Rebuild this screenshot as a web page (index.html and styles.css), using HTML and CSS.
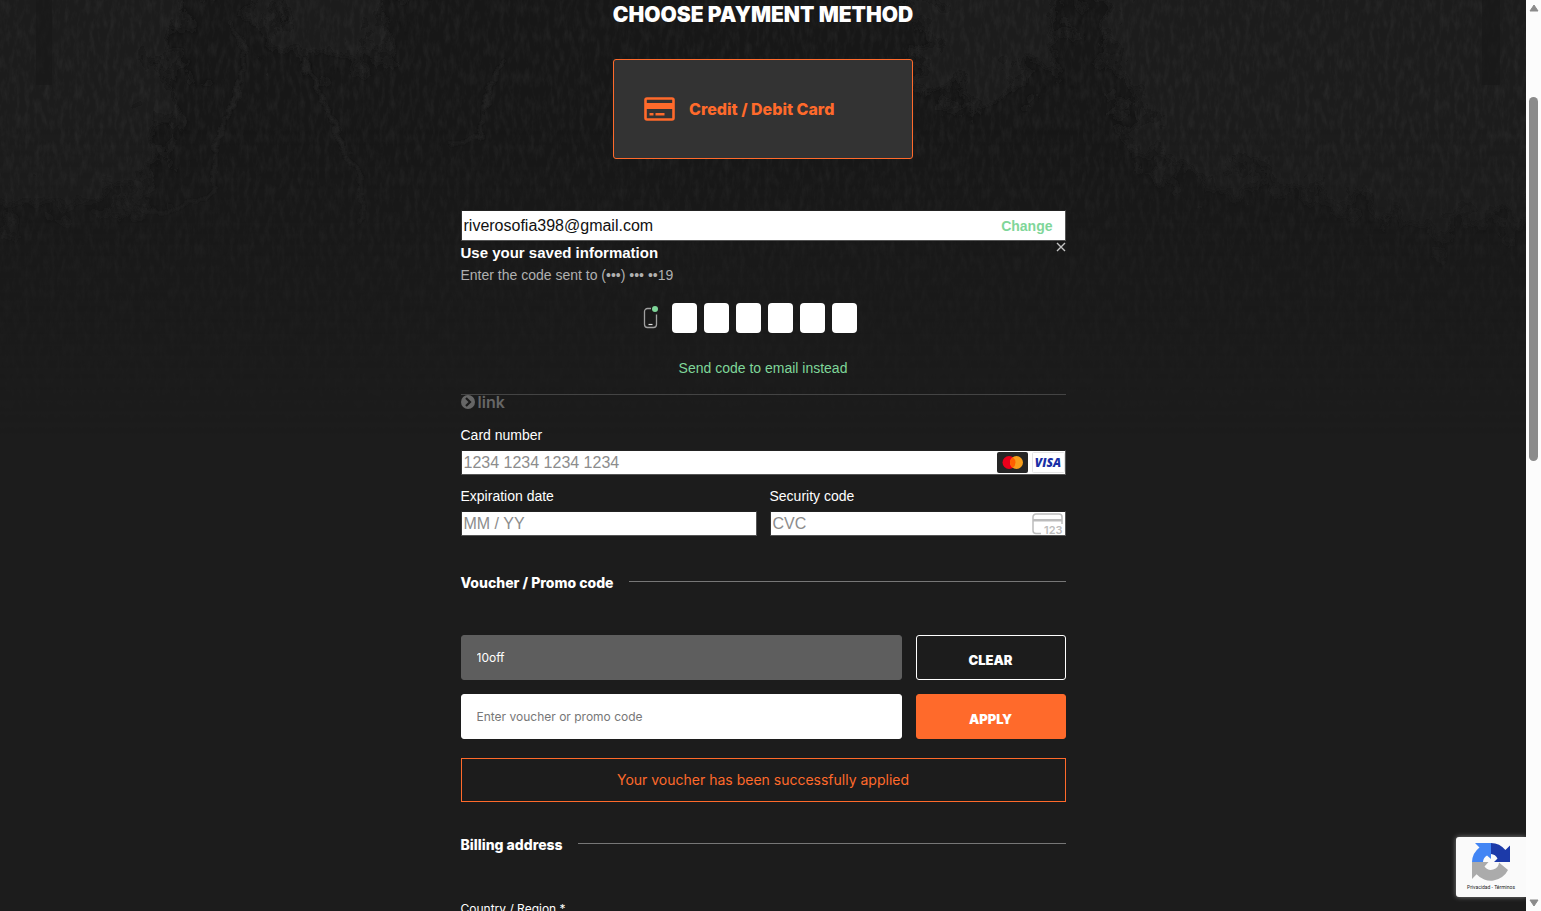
FILE: index.html
```html
<!DOCTYPE html>
<html lang="en">
<head>
  <meta charset="UTF-8">
  <title>Checkout</title>
  <link rel="stylesheet" href="styles.css">
</head>
<body>
  <div class="page">
    <svg class="texture" viewBox="0 0 1526 620" preserveAspectRatio="none" aria-hidden="true">
      <defs>
        <filter id="grain" x="0" y="0" width="100%" height="100%">
          <feTurbulence type="fractalNoise" baseFrequency="0.2 0.07" numOctaves="4" seed="8"/>
          <feColorMatrix values="0 0 0 0 1  0 0 0 0 1  0 0 0 0 1  0.5 0 0 0 -0.2"/>
        </filter>
        <filter id="soft" x="-20%" y="-20%" width="140%" height="140%">
          <feTurbulence type="fractalNoise" baseFrequency="0.04" numOctaves="5" seed="5" result="noise"/>
          <feGaussianBlur in="SourceGraphic" stdDeviation="9" result="blur"/>
          <feDisplacementMap in="blur" in2="noise" scale="90" xChannelSelector="R" yChannelSelector="G"/>
        </filter>
        <filter id="rough" x="-10%" y="-10%" width="120%" height="120%">
          <feTurbulence type="fractalNoise" baseFrequency="0.06" numOctaves="3" seed="3" result="noise"/>
          <feDisplacementMap in="SourceGraphic" in2="noise" scale="16" xChannelSelector="R" yChannelSelector="G"/>
          <feGaussianBlur stdDeviation="1"/>
        </filter>
        <linearGradient id="fade" x1="0" y1="0" x2="0" y2="1">
          <stop offset="0" stop-color="#fff"/>
          <stop offset="0.2" stop-color="#fff"/>
          <stop offset="0.7" stop-color="#000"/>
        </linearGradient>
        <mask id="fadeMask"><rect width="1526" height="620" fill="url(#fade)"/></mask>
      </defs>
      <g mask="url(#fadeMask)">
        <rect width="1526" height="620" fill="#171717"/>
        <g fill="#1e1e1e" filter="url(#soft)">
          <path d="M-60-60H215L165 60 175 120 140 200-60 210Z"/>
          <path d="M245-60H420L370 62 300 55 270 40Z"/>
          <path d="M1080-60H1600V200L1440 230 1300 190 1150 170Z"/>
          <path d="M920-60H1080L1050 60 980 110 920 80Z"/>
        </g>
        <rect width="1526" height="620" filter="url(#grain)" opacity="0.18"/>
        <g fill="none" stroke="#222" stroke-width="3" filter="url(#rough)">
          <path d="M228 20l18 30-14 55-16 40-3 48-42 20-50-6"/>
          <path d="M300 60l20 28 14 40 22 44 6 50"/>
          <path d="M505 60l-18 30-8 48-30 8"/>
        </g>
        <path d="M36 0h16v85H36zM1482 0h18v85h-18z" fill="#181818" opacity="0.6"/>
      </g>
    </svg>

    <main class="checkout">
      <h1>Choose payment method</h1>

      <button class="method" type="button">
        <svg width="31" height="24" viewBox="0 0 31 24" aria-hidden="true">
          <rect x="1.5" y="1.5" width="28" height="21" rx="1.5" fill="none" stroke="#ff6a2b" stroke-width="2.6"/>
          <path d="M2 6h27v6H2zM5.500 16h4v2.500h-4zM11.500 16h9v2.500h-9z" fill="#ff6a2b"/>
        </svg>
        Credit / Debit Card
      </button>

      <section class="saved">
        <div class="field email-field">
          <input type="email" value="riverosofia398@gmail.com" aria-label="Email">
          <button class="change" type="button">Change</button>
        </div>
        <div class="saved-head">
          <h2>Use your saved information</h2>
          <button class="close" type="button" aria-label="Close">
            <svg width="10" height="10" viewBox="0 0 10 10"><path d="M1 1l8 8M9 1l-8 8" stroke="#c4c4c4" stroke-width="1.4"/></svg>
          </button>
        </div>
        <p class="hint">Enter the code sent to (•••) ••• ••19</p>
        <div class="code">
          <svg width="16" height="24" viewBox="0 0 16 24" aria-hidden="true">
            <path d="M8 2.500H4.500a3 3 0 0 0-3 3v13a3 3 0 0 0 3 3h6a3 3 0 0 0 3-3V8.500" fill="none" stroke="#a0a0a0" stroke-width="1.3"/>
            <path d="M5.500 18.500h4" stroke="#e0e0e0" stroke-width="1.2"/>
            <circle cx="12" cy="3" r="3" fill="#7fd699"/>
          </svg>
          <div class="digits">
            <input type="text" maxlength="1" aria-label="Digit 1">
            <input type="text" maxlength="1" aria-label="Digit 2">
            <input type="text" maxlength="1" aria-label="Digit 3">
            <input type="text" maxlength="1" aria-label="Digit 4">
            <input type="text" maxlength="1" aria-label="Digit 5">
            <input type="text" maxlength="1" aria-label="Digit 6">
          </div>
        </div>
        <a class="send" href="#">Send code to email instead</a>
        <div class="link-brand">
          <svg width="14" height="14" viewBox="0 0 14 14" aria-hidden="true">
            <circle cx="7" cy="7" r="7" fill="#666"/>
            <path d="M5 3l4 4-4 4" fill="none" stroke="#1b1b1b" stroke-width="2.2"/>
          </svg>
          <span>link</span>
        </div>
      </section>

      <section class="card">
        <div class="group">
          <label for="number">Card number</label>
          <div class="field">
            <input id="number" type="text" placeholder="1234 1234 1234 1234">
            <svg width="31" height="21" viewBox="0 0 31 21" aria-label="Mastercard">
              <rect width="31" height="21" rx="2" fill="#252525"/>
              <circle cx="12" cy="10.500" r="6.500" fill="#eb001b"/>
              <circle cx="19.500" cy="10.500" r="6.500" fill="#f79e1b"/>
              <path d="M15.750 5.200a6.500 6.500 0 0 1 0 10.600 6.500 6.500 0 0 1 0-10.600z" fill="#ff5f00"/>
            </svg>
            <svg class="visa" width="33" height="21" viewBox="0 0 33 21" aria-label="Visa">
              <rect x="0.500" y="0.500" width="32" height="20" rx="1" fill="#fff" stroke="#e4e4e4"/>
              <text x="16" y="15" text-anchor="middle">VISA</text>
            </svg>
          </div>
        </div>
        <div class="group">
          <label for="expiry">Expiration date</label>
          <div class="field">
            <input id="expiry" type="text" placeholder="MM / YY">
          </div>
        </div>
        <div class="group">
          <label for="cvc">Security code</label>
          <div class="field">
            <input id="cvc" type="text" placeholder="CVC">
            <svg class="cvc-icon" width="33" height="22" viewBox="0 0 33 22" aria-hidden="true">
              <path d="M9 20.500H4a3 3 0 0 1-3-3V4a3 3 0 0 1 3-3h23a3 3 0 0 1 3 3v7" fill="none" stroke="#bcbcbc" stroke-width="1.5"/>
              <path d="M1 6h29v2.500H1z" fill="#bcbcbc"/>
              <text x="12" y="21">123</text>
            </svg>
          </div>
        </div>
      </section>

      <section class="voucher">
        <h3>Voucher / Promo code</h3>
        <form class="voucher-form">
          <input class="applied" type="text" value="10off" aria-label="Applied voucher">
          <button class="clear" type="button">Clear</button>
          <input type="text" placeholder="Enter voucher or promo code" aria-label="Voucher or promo code">
          <button class="apply" type="button">Apply</button>
        </form>
        <p class="notice">Your voucher has been successfully applied</p>
      </section>

      <section class="billing">
        <h3>Billing address</h3>
        <label for="country">Country / Region *</label>
        <select id="country"><option>Spain</option></select>
      </section>
    </main>

    <div class="recaptcha">
      <svg width="40" height="40" viewBox="0 0 40 40" aria-hidden="true">
        <path d="M39 20V3.500l-4.600 4.600A19 19 0 0 0 20 1v11a8 8 0 0 1 6.500 4.500L23 20z" fill="#1c3aa9"/>
        <path d="M20 1H4l4.500 4.600A19 19 0 0 0 1 20h11a8 8 0 0 1 4-6.500L20 17z" fill="#4285f4"/>
        <path d="M1 20v17l4.600-4.800A19 19 0 0 0 37 28l-9-7.500A8 8 0 0 1 13.500 24.500L17.500 20z" fill="#ababab"/>
      </svg>
      <small><a href="#">Privacidad</a> - <a href="#">Términos</a></small>
    </div>
  </div>

  <div class="scrollbar" aria-hidden="true">
    <svg width="10" height="8" viewBox="0 0 10 8"><path d="M5 1l4 6H1z" fill="#8b8b8b" stroke="#8b8b8b" stroke-linejoin="round"/></svg>
    <div class="thumb"></div>
    <svg width="10" height="8" viewBox="0 0 10 8"><path d="M5 7L1 1h8z" fill="#8b8b8b" stroke="#8b8b8b" stroke-linejoin="round"/></svg>
  </div>
</body>
</html>
```

FILE: styles.css
```css
* { box-sizing: border-box; }
body { margin: 0; display: flex; height: 100vh; overflow: hidden; background: #1c1c1c; color: #fff; font-family: Inter, sans-serif; }
h1, h2, h3, p { margin: 0; }
button, input { font: inherit; }
button { cursor: pointer; padding: 0; border: 0; background: none; }
svg { display: block; flex: none; }

.page { flex: 1; position: relative; overflow: hidden; }
.texture { position: absolute; top: 0; left: 0; width: 100%; height: 620px; }
.checkout { position: relative; max-width: 605px; margin: 0 auto; }

h1 { font-size: 21px; line-height: 30px; font-weight: 900; text-align: center; text-transform: uppercase; }
.method { display: flex; align-items: center; gap: 14px; width: 300px; height: 100px; margin: 29px auto 51px; padding: 0 30px; border: 1px solid #ff6a2b; border-radius: 3px; background: #333; color: #ff6a2b; font-size: 16px; font-weight: 800; }

/* stripe style fields */
.saved, .card { font-family: "Liberation Sans", Arial, sans-serif; font-size: 14px; line-height: 20px; }
.field { display: flex; align-items: center; height: 25px; border: 1px solid #555; border-top-color: #222; border-left-color: #333; background: #fff; }
.field input { flex: 1; min-width: 0; padding: 0 2px; border: 0; outline: 0; background: none; font-size: 16px; color: #111; }
.field input::placeholder { color: #8c8c8c; }
.email-field { height: 31px; }
.change { margin-right: 12px; color: #7fd699; font-weight: 700; }

.saved-head { display: flex; justify-content: space-between; align-items: flex-start; margin-top: 1px; }
h2 { font-size: 15px; line-height: 22px; font-weight: 700; }
.hint { line-height: 22px; color: #b0b0b0; }
.code { display: flex; justify-content: center; align-items: center; gap: 13px; margin: 17px 26px 25px 0; }
.digits { display: flex; gap: 7px; }
.digits input { width: 25px; height: 30px; padding: 0; border: 0; border-radius: 4px; background: #fff; text-align: center; }
.send { display: block; color: #7fd699; text-align: center; text-decoration: none; }
.link-brand { display: flex; align-items: center; gap: 3px; height: 15px; margin-top: 16px; border-top: 1px solid #444; color: #666; font-family: Inter, sans-serif; font-size: 16px; font-weight: 600; }

.card { display: grid; grid-template-columns: 1fr 1fr; gap: 11px 13px; margin-top: 16px; }
.card .group:first-child { grid-column: 1 / -1; }
.card label { display: block; margin-bottom: 5px; }
.visa { margin-left: 4px; }
.visa text { font: italic 800 12px "Open Sans", sans-serif; fill: #1a2fa5; }
.cvc-icon text { font: 600 11px Inter, sans-serif; fill: #bcbcbc; }

h3 { display: flex; gap: 15px; font-size: 14px; line-height: 20px; font-weight: 800; }
h3::after { content: ""; flex: 1; height: 1px; margin-top: 8px; background: #777; }
.voucher { margin-top: 37px; }
.voucher-form { display: grid; grid-template-columns: 1fr 150px; gap: 14px; margin-top: 42px; }
.voucher-form input { min-width: 0; height: 45px; padding: 0 15px; border: 1px solid #fff; border-radius: 3px; background: #fff; font-size: 12px; }
.voucher-form input::placeholder { color: #777; }
.voucher-form .applied { border-color: #5e5e5e; background: #5e5e5e; color: #fff; }
.voucher-form button { padding-top: 5px; border: 1px solid #fff; border-radius: 3px; color: #fff; font-size: 13px; font-weight: 900; text-transform: uppercase; }
.voucher-form .apply { border-color: #ff6a2b; background: #ff6a2b; }
.notice { margin-top: 19px; border: 1px solid #ff6a2b; color: #ff6a2b; font-size: 14px; line-height: 42px; text-align: center; }

.billing { margin-top: 33px; }
.billing label { display: block; margin-top: 44px; font-size: 12px; line-height: 20px; }
.billing select { width: 100%; height: 45px; margin-top: 8px; }

.recaptcha { position: absolute; right: 0; bottom: 14px; display: flex; flex-direction: column; align-items: center; width: 70px; height: 60px; padding-top: 5px; border-radius: 3px 0 0 3px; background: #fafafa; box-shadow: 0 0 5px #808080; }
.recaptcha small { font-family: Roboto, sans-serif; font-size: 5px; line-height: 10px; color: #222; }
.recaptcha a { color: inherit; text-decoration: none; }

.scrollbar { display: flex; flex-direction: column; align-items: center; justify-content: space-between; width: 15px; padding: 4px 0; background: #fcfcfc; }
.thumb { width: 9px; height: 40vh; margin: 85px 0 auto; border-radius: 5px; background: #8b8b8b; }
```
